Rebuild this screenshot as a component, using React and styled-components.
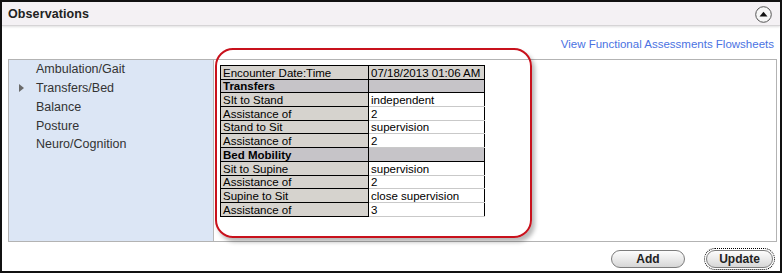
import React from 'react'
import styled, {createGlobalStyle} from 'styled-components'

const GlobalStyle = createGlobalStyle`
  html, body {
    margin: 0;
    padding: 0;
    background: #fff;
  }
  body {
    font-family: 'Liberation Sans', Arial, sans-serif;
  }
`

const Frame = styled.div`
  position: relative;
  box-sizing: border-box;
  width: 782px;
  height: 273px;
  border: 2px solid #111;
  background: #fff;
  overflow: hidden;
`

const Header = styled.div`
  display: flex;
  align-items: center;
  justify-content: space-between;
  height: 23px;
  padding: 0 8px 0 6px;
  background: #f4f1f4;
  box-shadow: 0 1px 0 #d6d4d6, 0 2px 2px rgba(0, 0, 0, 0.12);
`

const Title = styled.span`
  font-size: 12.5px;
  font-weight: bold;
  color: #222;
  letter-spacing: 0.1px;
`

const CollapseButton = styled.span`
  display: flex;
  width: 17px;
  height: 17px;
  margin-top: 2px;
`

const LinkRow = styled.div`
  display: flex;
  justify-content: flex-end;
  padding: 12px 6px 5px 0;
  height: 14px;
`

const Link = styled.a`
  font-size: 11.5px;
  line-height: 14px;
  color: #4a72e2;
  text-decoration: none;
  cursor: pointer;
`

const Panel = styled.div`
  display: flex;
  height: 181px;
  margin: 3px 3px 0 6px;
  border: 1px solid #b3b3b3;
`

const Nav = styled.ul`
  width: 204px;
  margin: 0;
  padding: 0;
  list-style: none;
  background: #dce6f5;
  border-right: 1px solid #b8b8b8;
`

const NavItem = styled.li`
  display: flex;
  align-items: center;
  height: 18.75px;
  padding-left: 10px;
  font-size: 12.5px;
  color: #333;
`

const Caret = styled.span`
  width: 17px;
  display: flex;
  align-items: center;
`

const Content = styled.div`
  flex: 1;
  padding: 5px 0 0 6px;
`

const Grid = styled.table`
  border-collapse: collapse;
  border: 1px solid #000;
  font-size: 11.5px;
  color: #000;
`

const Row = styled.tr`
  height: 13.7px;
`

const Cell = styled.td`
  box-sizing: border-box;
  padding: 0 0 0 2px;
  height: 13.7px;
  line-height: 12px;
  vertical-align: bottom;
  white-space: nowrap;
  width: ${(props) => (props.value ? '116px' : '148px')};
  background: ${(props) =>
    props.section ? '#c6c4c8' : props.value && !props.header ? '#fff' : '#d6d3ce'};
  font-weight: ${(props) => (props.section ? 'bold' : 'normal')};
  border-left: 1px solid #000;
  border-bottom: 1px solid
    ${(props) => (props.value && !props.header && !props.section ? '#c9c9c9' : '#000')};
`

const Callout = styled.div`
  position: absolute;
  left: 213px;
  top: 46px;
  width: 313px;
  height: 186px;
  border: 2px solid #c8111c;
  border-radius: 18px;
  box-shadow: 3px 4px 4px rgba(0, 0, 0, 0.28);
  pointer-events: none;
`

const Actions = styled.div`
  display: flex;
  justify-content: flex-end;
  gap: 21px;
  padding: 8px 7px 0 0;
`

const Button = styled.button`
  box-sizing: border-box;
  width: ${(props) => props.width};
  height: 18px;
  padding: 0;
  border: 1px solid #7c7c7c;
  border-radius: 9px;
  background: linear-gradient(#fdfdfd 0%, #ececec 45%, #d6d6d6 100%);
  font-family: 'Liberation Sans', Arial, sans-serif;
  font-size: 12px;
  font-weight: bold;
  color: #222;
  outline: ${(props) => (props.focused ? '1px dotted #000' : 'none')};
  outline-offset: 1px;
`

const rows = [
  {label: 'Encounter Date:Time', value: '07/18/2013 01:06 AM', header: true},
  {label: 'Transfers', section: true},
  {label: 'SIt to Stand', value: 'independent'},
  {label: 'Assistance of', value: '2'},
  {label: 'Stand to Sit', value: 'supervision'},
  {label: 'Assistance of', value: '2'},
  {label: 'Bed Mobility', section: true},
  {label: 'Sit to Supine', value: 'supervision'},
  {label: 'Assistance of', value: '2'},
  {label: 'Supine to Sit', value: 'close supervision'},
  {label: 'Assistance of', value: '3'}
]

const navItems = [
  'Ambulation/Gait',
  'Transfers/Bed',
  'Balance',
  'Posture',
  'Neuro/Cognition'
]

const App = () => (
  <Frame>
    <GlobalStyle />
    <Header>
      <Title>Observations</Title>
      <CollapseButton>
        <svg width='17' height='17' viewBox='0 0 17 17'>
          <circle cx='8.5' cy='8.5' r='7.8' fill='#f6f6f6' stroke='#555' strokeWidth='1' />
          <path d='M4.5 10.5 L8.5 5.8 L12.5 10.5 Z' fill='#111' />
        </svg>
      </CollapseButton>
    </Header>
    <LinkRow>
      <Link>View Functional Assessments Flowsheets</Link>
    </LinkRow>
    <Panel>
      <Nav>
        {navItems.map((item) => (
          <NavItem key={item}>
            <Caret>
              {item === 'Transfers/Bed' && (
                <svg width='6' height='8' viewBox='0 0 6 8'>
                  <path d='M0 0 L5 4 L0 8 Z' fill='#6a6a6a' />
                </svg>
              )}
            </Caret>
            {item}
          </NavItem>
        ))}
      </Nav>
      <Content>
        <Grid>
          <tbody>
            {rows.map((row, i) => (
              <Row key={i}>
                <Cell section={row.section} header={row.header}>
                  {row.label}
                </Cell>
                <Cell value section={row.section} header={row.header}>
                  {row.value}
                </Cell>
              </Row>
            ))}
          </tbody>
        </Grid>
      </Content>
    </Panel>
    <Actions>
      <Button width='74px'>Add</Button>
      <Button width='67px' focused>
        Update
      </Button>
    </Actions>
    <Callout />
  </Frame>
)

export default App
